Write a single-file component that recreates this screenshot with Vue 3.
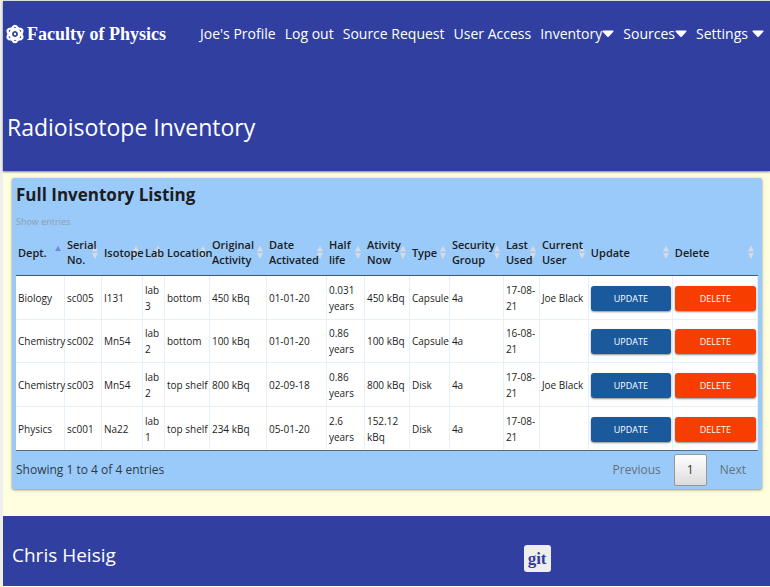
<script setup>
const nav = [
  { label: "Joe's Profile" },
  { label: 'Log out' },
  { label: 'Source Request' },
  { label: 'User Access' },
  { label: 'Inventory', menu: true },
  { label: 'Sources', menu: true },
  { label: 'Settings', menu: true, spaced: true }
]

const columns = [
  { label: 'Dept.', share: 49, sorted: true },
  { label: 'Serial\nNo.', share: 37 },
  { label: 'Isotope', share: 41 },
  { label: 'Lab', share: 22 },
  { label: 'Location', share: 45 },
  { label: 'Original\nActivity', share: 57 },
  { label: 'Date\nActivated', share: 60 },
  { label: 'Half\nlife', share: 38 },
  { label: 'Ativity\nNow', share: 45 },
  { label: 'Type', share: 40 },
  { label: 'Security\nGroup', share: 54 },
  { label: 'Last\nUsed', share: 36 },
  { label: 'Current\nUser', share: 49 },
  { label: 'Update', share: 84 },
  { label: 'Delete', share: 85 }
]
const total = columns.reduce((sum, c) => sum + c.share, 0)

const rows = [
  ['Biology', 'sc005', 'I131', 'lab\n3', 'bottom', '450 kBq', '01-01-20', '0.031\nyears', '450 kBq', 'Capsule', '4a', '17-08-\n21', 'Joe Black'],
  ['Chemistry', 'sc002', 'Mn54', 'lab\n2', 'bottom', '100 kBq', '01-01-20', '0.86\nyears', '100 kBq', 'Capsule', '4a', '16-08-\n21', ''],
  ['Chemistry', 'sc003', 'Mn54', 'lab\n2', 'top shelf', '800 kBq', '02-09-18', '0.86\nyears', '800 kBq', 'Disk', '4a', '17-08-\n21', 'Joe Black'],
  ['Physics', 'sc001', 'Na22', 'lab\n1', 'top shelf', '234 kBq', '05-01-20', '2.6\nyears', '152.12\nkBq', 'Disk', '4a', '17-08-\n21', '']
]
</script>

<template>
  <div class="page">
    <header class="masthead">
      <div class="topbar">
        <a class="brand" href="#">
          <svg class="atom" viewBox="0 0 18 20" aria-hidden="true">
            <g fill="none" stroke="currentColor" stroke-width="2.3">
              <ellipse cx="9" cy="10" rx="4" ry="8.2" />
              <ellipse cx="9" cy="10" rx="4" ry="8.2" transform="rotate(60 9 10)" />
              <ellipse cx="9" cy="10" rx="4" ry="8.2" transform="rotate(120 9 10)" />
            </g>
            <circle cx="9" cy="10" r="1.2" fill="currentColor" />
          </svg>
          <span>Faculty of Physics</span>
        </a>
        <nav class="nav">
          <a v-for="item in nav" :key="item.label" href="#" :class="{ spaced: item.spaced }">
            <span>{{ item.label }}</span>
            <svg v-if="item.menu" class="caret" viewBox="0 0 12 8" aria-hidden="true">
              <path d="M1 0.5H11Q12 0.8 11.3 1.8L6.7 6.7Q6 7.2 5.3 6.7L0.7 1.8Q0 0.8 1 0.5Z" fill="currentColor" />
            </svg>
          </a>
        </nav>
      </div>
      <h1>Radioisotope Inventory</h1>
    </header>

    <main>
      <section class="card">
        <h2>Full Inventory Listing</h2>
        <p class="show">Show entries</p>
        <table>
          <colgroup>
            <col v-for="c in columns" :key="c.label" :style="{ width: (c.share / total) * 100 + '%' }" />
          </colgroup>
          <thead>
            <tr>
              <th v-for="c in columns" :key="c.label" scope="col">
                <div class="head">
                  <span class="title">{{ c.label }}</span>
                  <svg v-if="c.sorted" class="sort" viewBox="0 0 6 14" aria-hidden="true">
                    <path d="M3 1L6 6H0Z" fill="#7b86e0" />
                  </svg>
                  <svg v-else class="sort" viewBox="0 0 6 14" aria-hidden="true">
                    <path d="M3 0.5L6 6.5H0ZM0 8H6L3 14Z" fill="#d6dae2" />
                  </svg>
                </div>
              </th>
            </tr>
          </thead>
          <tbody>
            <tr v-for="row in rows" :key="row[1]">
              <td v-for="(cell, i) in row" :key="i">{{ cell }}</td>
              <td class="action"><button type="button" class="btn update">UPDATE</button></td>
              <td class="action"><button type="button" class="btn delete">DELETE</button></td>
            </tr>
          </tbody>
        </table>
        <div class="summary">
          <p>Showing 1 to 4 of 4 entries</p>
          <div class="pager">
            <button type="button">Previous</button>
            <button type="button" class="current">1</button>
            <button type="button">Next</button>
          </div>
        </div>
      </section>
    </main>

    <footer>
      <div class="author">Chris Heisig</div>
      <div class="repo"><a href="#">git</a></div>
    </footer>
  </div>
</template>

<style>
body {
  background: #ffffe0;
}
</style>

<style scoped>
.page {
  border-left: 3px solid #efefef;
  border-top: 1px solid #e4e4e8;
  padding-bottom: 1px;
  font-family: "Open Sans", "Noto Sans", sans-serif;
  color: #1c1c22;
}
h1, h2, p {
  margin: 0;
  font-weight: 400;
}
a {
  color: inherit;
  text-decoration: none;
}
.masthead {
  background: #3140a0;
  color: #fff;
  padding: 17px 6px 26px 3px;
  box-shadow: 0 1px 2px rgba(0, 0, 0, 0.5);
}
.topbar {
  display: flex;
  align-items: center;
  height: 32px;
}
.brand {
  display: flex;
  align-items: center;
  gap: 3px;
  flex: 0 0 194px;
  font: 700 18px/24px "Liberation Serif", serif;
}
.atom {
  width: 18px;
  height: 20px;
}
.nav {
  flex: 1;
  display: flex;
  justify-content: space-between;
  font-size: 14px;
  line-height: 20px;
}
.nav a {
  display: flex;
  align-items: center;
  white-space: nowrap;
}
.nav .spaced {
  gap: 4px;
}
.caret {
  width: 12px;
  height: 8px;
}
h1 {
  padding: 59px 0 0 1px;
  font-size: 23px;
  line-height: 36px;
}
main {
  padding: 7px 8px 27px 9px;
}
.card {
  background: #99caf9;
  border-radius: 2px;
  padding: 4px 4px 3px;
  box-shadow: 0 1px 3px rgba(0, 0, 0, 0.45);
}
h2 {
  font-size: 17px;
  font-weight: 700;
  line-height: 26px;
}
.show {
  padding-top: 7px;
  font-size: 9px;
  line-height: 14px;
  color: #8e9fae;
}
table {
  width: 100%;
  table-layout: fixed;
  border-collapse: separate;
  border-spacing: 0;
  border-bottom: 1px solid #566a80;
}
th {
  height: 46px;
  padding: 0 4px 0 2px;
  text-align: left;
  font-size: 11px;
  line-height: 15px;
  font-weight: 600;
  white-space: pre;
  border-bottom: 1px solid #41576f;
}
.head {
  display: flex;
  align-items: center;
}
.title {
  flex: 1;
  min-width: 0;
  position: relative;
  z-index: 1;
}
.sort {
  flex: none;
  width: 6px;
  height: 14px;
}
td {
  padding: 5px 0 5px 2px;
  background: #fff;
  border-right: 1px solid #e3f1fd;
  border-bottom: 1px solid #e3f1fd;
  font-size: 10px;
  line-height: 16px;
  font-weight: 400;
  white-space: pre;
}
tr:nth-child(odd) td {
  padding-top: 6px;
}
tr:last-child td {
  padding-top: 6px;
  border-bottom: 0;
}
td.action {
  padding-right: 1px;
}
.btn {
  display: block;
  width: 100%;
  height: 25px;
  padding: 0;
  border: 0;
  border-radius: 3px;
  color: #fff;
  font: 400 9px/25px "Open Sans", sans-serif;
  box-shadow: 0 1px 2px rgba(0, 0, 0, 0.45);
}
.update {
  background: #1a5a9c;
}
.delete {
  background: #f73d00;
}
.summary {
  display: flex;
  justify-content: space-between;
  align-items: flex-start;
  padding-top: 3px;
  font-size: 12px;
  line-height: 32px;
  color: #2d3a48;
}
.pager {
  display: flex;
  gap: 1px;
}
.pager button {
  height: 32px;
  padding: 0 11px;
  border: 1px solid transparent;
  border-radius: 2px;
  background: none;
  font: 400 12px/30px "Open Sans", sans-serif;
  color: #65727e;
}
.pager .current {
  padding: 0 12px;
  color: #333;
  border-color: #979797;
  background: linear-gradient(#fff, #dcdcdc);
}
footer {
  display: grid;
  grid-template-columns: 27fr 13fr;
  align-items: center;
  height: 70px;
  padding: 8px 0 0 9px;
  box-sizing: border-box;
  background: #3140a0;
  color: #fff;
}
.author {
  font-size: 19px;
  line-height: 28px;
}
.repo {
  padding-top: 6px;
}
.repo a {
  display: inline-block;
  padding: 0 4px;
  border-radius: 3px;
  background: #eee;
  color: #3140a0;
  font: 700 17px/27px "Liberation Serif", serif;
}
</style>
